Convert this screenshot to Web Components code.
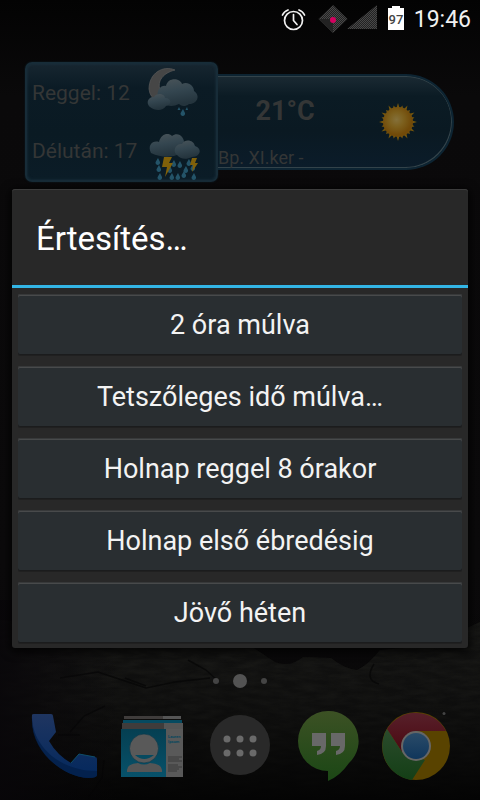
<!DOCTYPE html>
<html lang="hu">
<head>
<meta charset="utf-8">
<meta name="viewport" content="width=device-width, initial-scale=1">
<title>Értesítés…</title>
<style>
  html { background: #070607; }
  body { margin: 0; font-family: Roboto, "Noto Sans", sans-serif; }
</style>
</head>
<body>
<phone-screen>
  <status-bar slot="status" battery="97" time="19:46"></status-bar>
  <weather-widget temperature="21°C" place="Bp. XI.ker -">
    <forecast-row icon="night">Reggel: 12</forecast-row>
    <forecast-row icon="storm">Délután: 17</forecast-row>
  </weather-widget>
  <page-dots slot="bottom"></page-dots>
  <app-dock slot="bottom"></app-dock>
  <alert-dialog slot="dialog">
    <span slot="title">Értesítés…</span>
    <dialog-option>2 óra múlva</dialog-option>
    <dialog-option>Tetszőleges idő múlva…</dialog-option>
    <dialog-option>Holnap reggel 8 órakor</dialog-option>
    <dialog-option>Holnap első ébredésig</dialog-option>
    <dialog-option>Jövő héten</dialog-option>
  </alert-dialog>
</phone-screen>

<script>
const define = (name, render) => customElements.define(name, class extends HTMLElement {
  connectedCallback() {
    if (this.shadowRoot) return;
    this.attachShadow({ mode: 'open' }).innerHTML = render(this);
  }
});

define('phone-screen', () => `
<style>
  :host { display: flex; flex-direction: column; position: relative; min-height: 100vh; overflow: hidden;
    background: linear-gradient(#030303, #0a090a 12%, #0b0a0b 70%, #090809); }
  .wall { position: absolute; inset: auto 0 0 0; width: 100%; height: 300px; }
  main { flex: 1; position: relative; padding: 22px 26px 0 25px; }
  .bottom { position: relative; }
  .overlay { position: absolute; inset: 37px 0 0; display: grid; align-items: center; padding: 0 12px; }
</style>
<svg class="wall" viewBox="0 0 480 300" preserveAspectRatio="none" aria-hidden="true">
  <defs>
    <filter id="wood" x="0" y="0" width="100%" height="100%" color-interpolation-filters="sRGB">
      <feTurbulence type="fractalNoise" baseFrequency=".05 .2" numOctaves="4" seed="8"/>
      <feColorMatrix values="0 0 0 0 .12  0 0 0 0 .12  0 0 0 0 .11  1.2 .8 0 0 -.65"/>
      <feComposite in2="SourceGraphic" operator="in"/>
    </filter>
    <linearGradient id="fade" x2="0" y2="1">
      <stop stop-color="#050505" stop-opacity="0"/><stop offset=".5" stop-color="#050505" stop-opacity=".35"/>
      <stop offset="1" stop-color="#030303" stop-opacity=".95"/>
    </linearGradient>
    <linearGradient id="left"><stop stop-color="#080609" stop-opacity=".85"/><stop offset=".25" stop-color="#080609" stop-opacity="0"/></linearGradient>
  </defs>
  <path fill="#131312" d="M0 120L200 136 252 147 275 162Q290 168 303 157L331 158Q345 169 357 170 367 166 380 150L440 145 458 132 480 122V300H0Z"/>
  <path filter="url(#wood)" d="M0 120L200 136 252 147 275 162Q290 168 303 157L331 158Q345 169 357 170 367 166 380 150L440 145 458 132 480 122V300H0Z"/>
  <g fill="none" stroke="#080808" stroke-width="1.500" opacity=".8">
    <path d="M60 178L98 172 125 181 146 188 175 182 210 178M188 160L206 170 217 180M146 186L125 178M70 232L84 216 105 206M374 164Q364 180 379 184M88 298L102 278 104 260M58 235H80"/>
  </g>
  <rect y="100" width="480" height="200" fill="url(#fade)"/>
  <rect y="100" width="480" height="200" fill="url(#left)"/>
  <circle cx="444" cy="213.500" r="1.500" fill="#444"/>
</svg>
<slot name="status"></slot>
<main><slot></slot></main>
<div class="bottom"><slot name="bottom"></slot></div>
<div class="overlay"><slot name="dialog"></slot></div>`);

define('status-bar', el => `
<style>
  :host { display: flex; justify-content: flex-end; align-items: center; height: 40px; padding: 0 9px; position: relative; color: #f1f1f1; }
  svg { flex: none; }
  time { font-size: 23px; line-height: 32px; margin-left: 9px; }
  text { font: 500 13px Roboto, sans-serif; fill: #444; }
</style>
<svg width="124" height="40" viewBox="281 0 124 40" role="img" aria-label="Ébresztő, térerő, akkumulátor">
  <defs><pattern id="c" width="2" height="2" patternUnits="userSpaceOnUse"><rect width="2" height="2" fill="#222"/><rect width="1" height="1" fill="#484848"/><rect x="1" y="1" width="1" height="1" fill="#484848"/></pattern></defs>
  <g fill="none" stroke="#f1f1f1" stroke-width="1.700" stroke-linecap="round">
    <circle cx="293.500" cy="20.500" r="9"/><path d="M293.500 14.500V20.500L297 24.500M282.500 15Q284 11.500 288 10M304.500 15Q303 11.500 299 10" />
  </g>
  <path d="M333 5L347.500 19 333 33 318.500 19Z" fill="url(#c)"/>
  <path d="M318.500 19H333V33Z" fill="#222"/>
  <circle cx="333" cy="20" r="3" fill="#d4005f"/>
  <path d="M377 5V29H347Z" fill="url(#c)"/>
  <path d="M392 6H400V8H404V30H388V8H392Z" fill="#fff"/>
  <text x="396" y="24" text-anchor="middle">${el.getAttribute('battery')}</text>
</svg>
<time>${el.getAttribute('time')}</time>`);

define('weather-widget', el => `
<style>
  :host { display: flex; align-items: center; color: #343636; }
  .card { box-sizing: border-box; flex: 0 0 193px; height: 120px; padding: 0 5px; border: 2px solid #172c38; border-radius: 7px;
    background: linear-gradient(#172630, #0b1b25 20%, #0a1a23 60%, #0b1c27); box-shadow: inset 0 0 3px #1d3441, 0 0 2px #0d202b; }
  .now { box-sizing: border-box; flex: 1; height: 96px; display: grid; grid-template-columns: 134px 1fr; align-items: center;
    border: 2px solid #0d2432; border-left: 0; border-radius: 0 48px 48px 0;
    background: linear-gradient(#1b2a33, #0b1b24 22%, #0a1922 60%, #0b1c2a); box-shadow: inset 0 1px #33434a, inset -1px -1px #33434a; }
  .text { display: flex; flex-direction: column; height: 92px; box-sizing: border-box; padding-top: 16px; }
  strong { font-size: 27px; line-height: 38px; text-align: center; }
  .place { font-size: 18px; line-height: 24px; margin-top: 16px; margin-bottom: -3px; }
  svg { margin-left: 26px; }
</style>
<div class="card"><slot></slot></div>
<div class="now">
  <div class="text"><strong>${el.getAttribute('temperature')}</strong><span class="place">${el.getAttribute('place')}</span></div>
  <svg width="40" height="40" viewBox="-20 -20 40 40" role="img" aria-label="Napos">
    <defs><radialGradient id="s" cx=".45" cy=".42"><stop stop-color="#84703a"/><stop offset=".5" stop-color="#7c5f1c"/><stop offset="1" stop-color="#714a09"/></radialGradient></defs>
    <g fill="#75570d">${Array.from({ length: 24 }, (_, i) => `<path transform="rotate(${i * 15})" d="M-1.500 -14L0 ${i % 2 ? -17 : -19} 1.500 -14Z"/>`).join('')}</g>
    <circle r="15" fill="url(#s)"/>
  </svg>
</div>`);

const drop = (x, y) => `<path d="M${x} ${y}l2 4a2.300 2.300 0 1 1-4.400 0Z" fill="#245469"/>`;
const weather = {
  night: `
    <path d="M38 10C26 5 12 13 12 29Q13 38 20 40L23 30C20 21 26 13 38 10Z" transform="translate(-9 -4)" fill="#464646" stroke="#5a5a5a" stroke-width=".700"/>
    <path d="M12 36C10 28 15 23 20 24 22 15 34 16 36 22 42 19 48 24 48 29 55 34 51 42 43 42 38 46 34 43 33 42 25 46 17 44 12 36Z" transform="translate(0 -2)" fill="url(#k)"/>
    <path d="M4 44C-1 40 3 33 8 34 11 29 19 31 19 35 26 35 26 42 20 43 17 48 9 48 4 44Z" transform="translate(0 -1)" fill="url(#k)"/>
    ${drop(37, 45)}<path d="M33 43l1.500 3h-3ZM41 43l1 3h-2.500Z" fill="#245469"/>`,
  storm: `
    <path d="M5 33C1 25 7 20 13 22 15 14 22 12 26 16 32 11 39 17 38 24L34 34Q20 40 5 33Z" transform="translate(0 -2)" fill="url(#k)"/>
    <path d="M31 35C26 31 30 23 36 24 39 18 48 20 49 26 57 29 54 37 46 37 40 40 34 39 31 35Z" transform="translate(0 -2)" fill="url(#k)"/>
    ${[[12, 36], [28, 38], [43, 37], [13, 43], [24, 44], [34, 39], [40, 44], [14, 51], [26, 51], [32, 51], [38, 49], [48, 51], [47, 42]].map(p => drop(...p)).join('')}
    <path d="M18 35H26L23 41H27L19 55 21 45H16ZM46 36H51L49 41H52L46 50 47 43H44Z" fill="#80600a"/>`
};
define('forecast-row', el => `
<style>
  :host { display: flex; justify-content: space-between; align-items: center; height: 58px; padding-right: 9px; font-size: 21px; line-height: 28px; white-space: nowrap; }
  svg { flex: none; }
</style>
<span><slot></slot></span>
<svg width="56" height="58" viewBox="0 0 56 58" aria-hidden="true">
  <defs><linearGradient id="k" x2=".25" y2="1"><stop stop-color="#4a5459"/><stop offset=".5" stop-color="#344650"/><stop offset="1" stop-color="#24343d"/></linearGradient></defs>
  ${weather[el.getAttribute('icon')]}
</svg>`);

define('page-dots', () => `
<style>
  :host { display: flex; justify-content: center; align-items: center; gap: 14px; height: 16px; margin-bottom: 20px; }
  i { width: 6px; height: 6px; border-radius: 50%; background: #444; }
  .on { width: 14px; height: 14px; background: #535353; }
</style><i></i><i class="on"></i><i></i>`);

const quote = x => `<path d="M${x} 24H${x + 14}V37Q${x + 14} 45 ${x + 5} 46V42Q${x + 9} 41 ${x + 9} 37H${x}Z"/>`;
const apps = [
  ['Telefon', `
    <path d="M4 6Q4 5 6 5H23Q25 5 25 7L28 23 21 32Q29 46 43 54L51 45 67 48Q69 48 69 50V66Q69 69 60 69C32 67 2 40 4 6Z" fill="url(#p)"/>
    <path d="M4 9C5 36 30 62 69 62V66Q69 69 60 69C32 67 2 40 4 9Z" fill="#031f48" opacity=".75"/>
    <path d="M43 54L51 45 67 48" fill="none" stroke="#0e4d69"/>`],
  ['Névjegyek', `
    <path d="M8 7H47V10H8ZM6 14H48V20H6Z" fill="#3f3c3b"/><path d="M47 7H65V10H47ZM48 14H67V20H48Z" fill="#555"/>
    <path d="M7 11H66V14H7Z" fill="#064a60"/><path d="M5 20H50V68H5Z" fill="url(#b)"/><path d="M50 20H67V68H50Z" fill="#595959"/>
    <path d="M11 63V61Q11 55 22 54 28 57 34 54 46 55 46 61V63Z" fill="#555"/>
    <circle cx="28" cy="39.500" r="14.500" fill="#595959" stroke="#08374a" stroke-width=".600"/>
    <path d="M19 46H38Q28 54 19 46Z" fill="#064a60"/>
    <text x="52" y="29">Lauren</text><text x="52" y="34">Ipsum</text>
    <path d="M52 48H66M52 50H63M52 52H66M52 56H62M52 58H66M52 60H63M52 62H61" stroke="#363636" stroke-width=".900"/>`],
  ['Alkalmazások', `
    <circle cx="36" cy="36" r="30" fill="#292929"/>
    <g fill="#6a6a6a">${[23, 36, 49].map(x => `<circle cx="${x}" cy="30" r="3.500"/><circle cx="${x}" cy="44" r="3.500"/>`).join('')}</g>`],
  ['Hangouts', `
    <path d="M36 2A30 30 0 0 1 57 54Q48 67 36 72V62A30 30 0 0 1 36 2Z" fill="url(#h)"/><g fill="#686868">${quote(20)}${quote(39)}</g>`],
  ['Chrome', `
    <circle cx="36" cy="37" r="34" fill="#594300"/>
    <path d="M7 20A34 34 0 0 1 66 22H36L22 43Z" fill="url(#r)"/>
    <path d="M7 20L22 43 45 51 32 71A34 34 0 0 1 7 20Z" fill="url(#n)"/>
    <circle cx="36" cy="37" r="15" fill="#666"/><circle cx="36" cy="37" r="13" fill="url(#u)"/>`]
];
const gradient = (id, a, b) => `<linearGradient id="${id}" x2="0" y2="1"><stop stop-color="${a}"/><stop offset="1" stop-color="${b}"/></linearGradient>`;
const gradients = gradient('p', '#1f3560', '#03285d') + gradient('b', '#053f52', '#07516a') + gradient('h', '#3c5124', '#1b4715')
  + gradient('r', '#57202a', '#4b0811') + gradient('n', '#2b4b2c', '#143f16') + gradient('u', '#2a4b68', '#10365b');
define('app-dock', () => `
<style>
  :host { display: grid; grid-template-columns: repeat(5, 1fr); padding: 0 20px 19px; }
  button { appearance: none; border: 0; padding: 0; background: none; display: grid; place-items: center; }
  svg { display: block; }
  text { font: 700 4px Roboto, sans-serif; fill: #06475e; }
</style>
${apps.map(([name, art]) => `<button aria-label="${name}"><svg width="72" height="72" viewBox="0 0 72 72" aria-hidden="true"><defs>${gradients}</defs>${art}</svg></button>`).join('')}`);

define('alert-dialog', () => `
<style>
  :host { display: block; background: #282828; border-radius: 3px; color: #fff; box-shadow: inset 0 1px #3c3c3c, 0 2px 10px 2px #000c; }
  h1 { margin: 0; padding: 30px 24px 26px; font-size: 33px; line-height: 40px; font-weight: 400; border-bottom: 3px solid #33b5e5; }
  .list { display: grid; gap: 11px; padding: 6px 6px 5px; }
</style>
<section role="dialog" aria-labelledby="t"><h1 id="t"><slot name="title"></slot></h1><div class="list"><slot></slot></div></section>`);

define('dialog-option', () => `
<style>
  :host { display: block; }
  button { appearance: none; box-sizing: border-box; display: block; width: 100%; padding: 15px 8px 13px; border: 0; border-radius: 2px;
    background: #292e31; color: #f3f3f3; font: inherit; font-size: 27px; line-height: 33px;
    box-shadow: inset 0 1px #37393a, inset 0 2px #484a4b, inset 0 -1px #1b1c1d, 0 1px #202020; }
</style>
<button type="button"><slot></slot></button>`);
</script>
</body>
</html>
